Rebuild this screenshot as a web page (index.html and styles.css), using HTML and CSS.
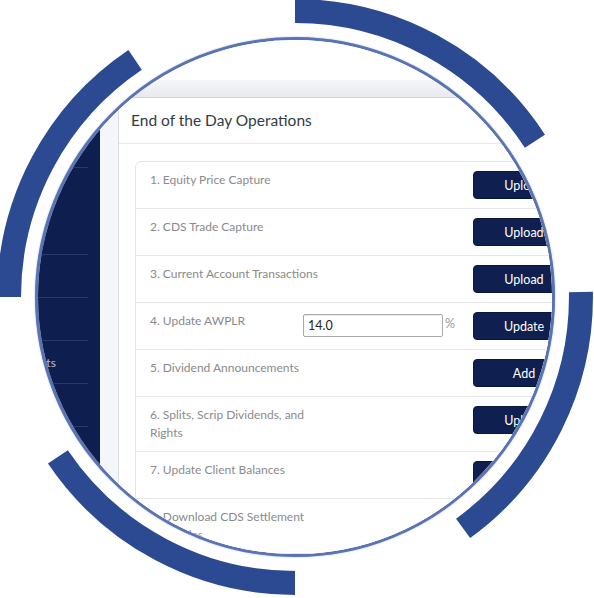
FILE: index.html
```html
<!DOCTYPE html>
<html lang="en">
<head>
<meta charset="utf-8">
<title>End of the Day Operations</title>
<link rel="stylesheet" href="styles.css">
</head>
<body>
<div class="stage">
  <svg class="arcs" width="594" height="598" viewBox="0 0 594 598" aria-hidden="true">
    <path d="M295 11 A286 286 0 0 1 534.9 141.2"/>
    <path d="M580.9 292 A286 286 0 0 1 463.1 528.4"/>
    <path d="M295 583 A286 286 0 0 1 57.9 456.9"/>
    <path d="M9 297 A286 286 0 0 1 135.1 59.9"/>
  </svg>
  <div class="lens">
    <div class="app">
      <div class="topbar"></div>
      <div class="app-body">
        <aside class="sidebar">
          <div class="nav-item nav-item--logo"></div>
          <div class="nav-item nav-item--tall"></div>
          <div class="nav-item"></div>
          <div class="nav-item"></div>
          <div class="nav-item"><span>Reports</span></div>
          <div class="nav-item"></div>
          <div class="nav-item"></div>
          <div class="nav-item"></div>
        </aside>
        <main class="main">
          <div class="crumbbar"></div>
          <div class="content">
            <section class="card">
              <header class="card-head">End of the Day Operations</header>
              <div class="card-body">
                <ul class="ops">
                  <li class="op"><span class="op-label">1. Equity Price Capture</span><button class="btn">Upload</button></li>
                  <li class="op"><span class="op-label">2. CDS Trade Capture</span><button class="btn">Upload</button></li>
                  <li class="op"><span class="op-label">3. Current Account Transactions</span><button class="btn">Upload</button></li>
                  <li class="op"><span class="op-label op-label--short">4. Update AWPLR</span><input class="rate" type="text" value="14.0"><span class="unit">%</span><button class="btn">Update</button></li>
                  <li class="op"><span class="op-label">5. Dividend Announcements</span><button class="btn">Add</button></li>
                  <li class="op"><span class="op-label">6. Splits, Scrip Dividends, and Rights</span><button class="btn">Upload</button></li>
                  <li class="op"><span class="op-label">7. Update Client Balances</span><button class="btn">Upload</button></li>
                  <li class="op"><span class="op-label">8. Download CDS Settlement Schedules</span><button class="btn">Download</button></li>
                </ul>
              </div>
            </section>
          </div>
        </main>
      </div>
    </div>
  </div>
</div>
</body>
</html>
```
FILE: styles.css
```css
* { box-sizing: border-box; }
html, body { margin: 0; padding: 0; background: #ffffff; }
body { font-family: Lato, "Noto Sans", "DejaVu Sans", sans-serif; }

.stage {
  position: relative;
  width: 594px;
  height: 598px;
  overflow: hidden;
  padding: 37px 0 0 35px;
}

.arcs {
  position: absolute;
  left: 0;
  top: 0;
}
.arcs path {
  fill: none;
  stroke: #2c4a92;
  stroke-width: 24;
}

.lens {
  width: 520px;
  height: 520px;
  border: 3px solid #5a74b3;
  border-radius: 50%;
  overflow: hidden;
  background: #ffffff;
  box-shadow: 0 0 1.5px rgba(90, 116, 179, 0.7);
}

.app {
  width: 570px;
}

.topbar {
  height: 40px;
  background: #ffffff;
}

.app-body {
  display: flex;
}

.sidebar {
  flex: 0 0 102px;
  margin-left: -40px;
  background: #0e1e4f;
  min-height: 480px;
}
.nav-item {
  height: 43px;
  margin-right: 12px;
  border-bottom: 1px solid #2a3a6b;
  display: flex;
  align-items: center;
  padding-left: 17px;
  font-size: 12px;
  color: #bcc2d8;
}
.nav-item--logo { height: 88px; }
.nav-item--tall { height: 87px; }

.main {
  flex: 1;
  display: flex;
  flex-direction: column;
}

.crumbbar {
  height: 18px;
  background: linear-gradient(#f5f6f8, #e9eaee);
  border-bottom: 1px solid #cfd1d7;
}

.content {
  flex: 1;
  display: flex;
  background: #f5f6fa;
  padding-left: 18px;
}

.card {
  flex: 1;
  background: #ffffff;
  border-left: 1px solid #dcdde3;
}

.card-head {
  height: 46px;
  padding-left: 12px;
  line-height: 45px;
  font-size: 15.5px;
  color: #353b45;
  border-bottom: 1px solid #e8e9ed;
}

.card-body {
  padding: 17px 18px 0 16px;
}

.ops {
  list-style: none;
  margin: 0;
  padding: 0;
  border: 1px solid #e3e4e6;
  border-radius: 6px;
}

.op {
  display: flex;
  align-items: flex-start;
  padding: 9px 14px;
  border-top: 1px solid #e8e8ea;
}
.op:first-child { border-top: none; }

.op-label {
  flex: 0 0 180px;
  font-size: 12px;
  line-height: 18px;
  color: #8a8a8c;
}
.op-label--short { flex-basis: 153px; }

.rate {
  width: 140px;
  height: 23px;
  margin-top: 2px;
  border: 1px solid #a9a9a9;
  border-radius: 2px;
  padding: 0 4px;
  font: 12.5px Lato, "Noto Sans", sans-serif;
  color: #222222;
  box-shadow: inset 0 1px 1px rgba(0, 0, 0, 0.08);
}

.unit {
  margin: 4px 0 0 2px;
  font-size: 12.5px;
  color: #9a9a9a;
}

.btn {
  margin-left: auto;
  width: 102px;
  height: 28px;
  background: #0f1f50;
  border: 1px solid #0a173f;
  border-radius: 4px;
  color: #ffffff;
  font: 12.5px Lato, "Noto Sans", sans-serif;
  padding: 0;
}
```
